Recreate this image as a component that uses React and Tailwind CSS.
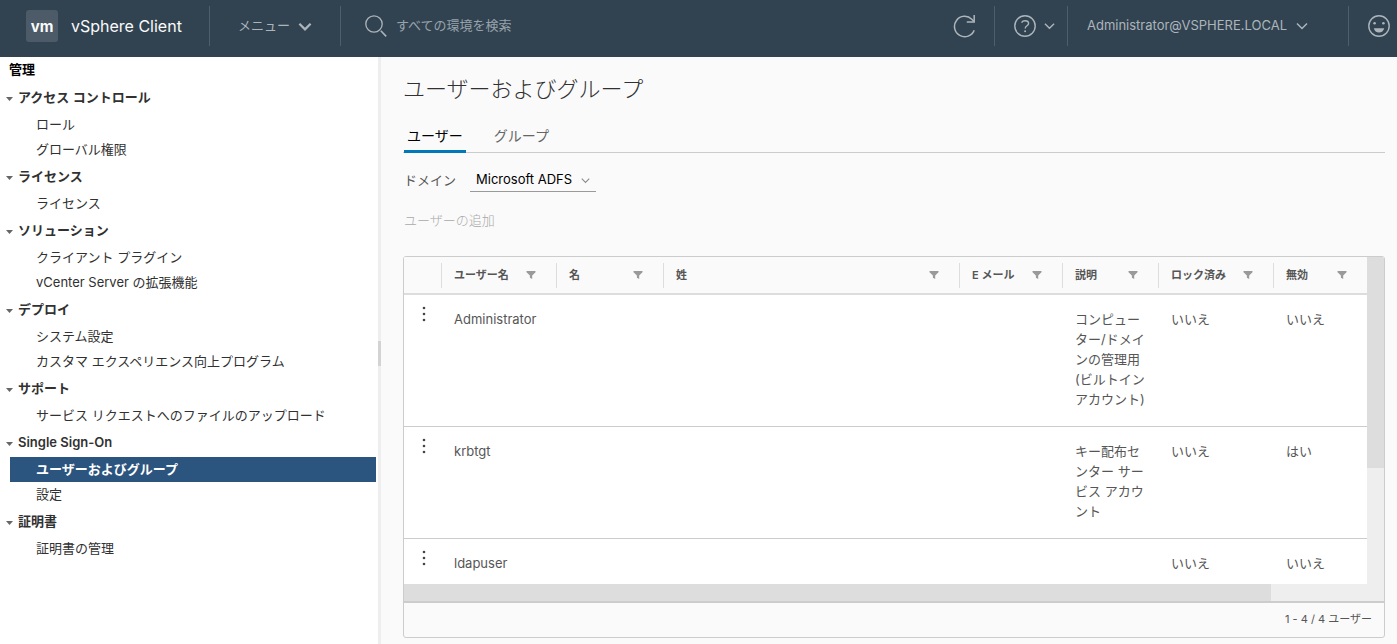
import React, { useState } from "react";

const sections = [
  { title: "アクセス コントロール", items: ["ロール", "グローバル権限"] },
  { title: "ライセンス", items: ["ライセンス"] },
  { title: "ソリューション", items: ["クライアント プラグイン", "vCenter Server の拡張機能"] },
  { title: "デプロイ", items: ["システム設定", "カスタマ エクスペリエンス向上プログラム"] },
  { title: "サポート", items: ["サービス リクエストへのファイルのアップロード"] },
  { title: "Single Sign-On", items: ["ユーザーおよびグループ", "設定"] },
  { title: "証明書", items: ["証明書の管理"] },
];

const columns = ["ユーザー名", "名", "姓", "E メール", "説明", "ロック済み", "無効"];

const users = [
  { name: "Administrator", description: "コンピューター/ドメインの管理用 (ビルトイン アカウント)", locked: "いいえ", disabled: "いいえ" },
  { name: "krbtgt", description: "キー配布センター サービス アカウント", locked: "いいえ", disabled: "はい" },
  { name: "ldapuser", description: "", locked: "いいえ", disabled: "いいえ" },
];

function Chevron({ className, width = 1.5 }) {
  return (
    <svg className={className} viewBox="0 0 12 8" fill="none" stroke="currentColor" strokeWidth={width} aria-hidden="true">
      <path d="M1 1.5 6 6.5l5-5" />
    </svg>
  );
}

function SearchIcon() {
  return (
    <svg className="size-[22px] shrink-0" viewBox="0 0 22 22" fill="none" stroke="currentColor" strokeWidth="1.3" aria-hidden="true">
      <circle cx="9" cy="9" r="8.2" />
      <path d="m15.8 15.8 5.4 5.6" strokeWidth="1.6" />
    </svg>
  );
}

function RefreshIcon() {
  return (
    <svg className="size-6" viewBox="0 0 24 24" fill="none" stroke="currentColor" strokeWidth="1.5" aria-hidden="true">
      <path d="M22.2 16.2A10.2 10.2 0 1 1 19.8 5.2l2 2" />
      <path d="M22.2 1v7h-7.4" />
    </svg>
  );
}

function HelpIcon() {
  return (
    <svg className="size-[22px]" viewBox="0 0 22 22" fill="none" stroke="currentColor" strokeWidth="1.4" aria-hidden="true">
      <circle cx="11" cy="11" r="10.2" />
      <path d="M7.6 7.6C8.3 6.4 9.5 5.8 11 5.8c2 0 3.6 1 3.6 2.7 0 2.3-3.4 2.2-3.4 4.9" />
      <circle cx="11.1" cy="16.2" r="1" fill="currentColor" stroke="none" />
    </svg>
  );
}

function SmileIcon() {
  return (
    <svg className="size-[22px]" viewBox="0 0 22 22" fill="none" stroke="currentColor" strokeWidth="1.4" aria-hidden="true">
      <circle cx="11" cy="11" r="10.2" />
      <circle cx="6.6" cy="8.2" r="1.3" fill="currentColor" stroke="none" />
      <circle cx="15.4" cy="8.2" r="1.3" fill="currentColor" stroke="none" />
      <path d="M5.8 13.2h10.4c-.6 2.8-2.6 4.4-5.2 4.4s-4.6-1.6-5.2-4.4Z" fill="currentColor" stroke="none" />
    </svg>
  );
}

function FilterIcon() {
  return (
    <svg className="h-2 w-[10px]" viewBox="0 0 10 8" fill="currentColor" aria-hidden="true">
      <path d="M.5 0h9v1.2L6.2 4.4V8L3.9 6.8V4.4L.5 1.2Z" />
    </svg>
  );
}

function Divider() {
  return <div className="h-10 w-px shrink-0 bg-[#4f5e6a]" />;
}

function TopBar() {
  return (
    <header className="flex h-[57px] shrink-0 items-center bg-[#314351] pr-[7px] pb-[5px] pl-[26px] text-[13px] text-[#adb5bb]">
      <a href="#home" className="flex items-center gap-[13px] pr-[27px] text-base whitespace-nowrap text-[#fafafa]">
        <span className="flex size-8 items-center justify-center rounded-[3px] bg-[#4c5b67] text-[15px] leading-none font-bold">vm</span>
        vSphere Client
      </a>
      <Divider />
      <button type="button" className="flex items-center gap-2 px-7 whitespace-nowrap">
        メニュー
        <Chevron className="h-[9px] w-[14px]" width={2} />
      </button>
      <Divider />
      <label className="flex flex-1 items-center gap-[9px] pl-6">
        <SearchIcon />
        <input
          type="search"
          aria-label="すべての環境を検索"
          placeholder="すべての環境を検索"
          className="w-full min-w-0 bg-transparent outline-none placeholder:text-[#98a2aa]"
        />
      </label>
      <button type="button" aria-label="更新" className="px-[18px]">
        <RefreshIcon />
      </button>
      <Divider />
      <button type="button" aria-label="ヘルプ" className="flex items-center gap-2 pr-3 pl-[19px]">
        <HelpIcon />
        <Chevron className="h-2 w-[11px]" />
      </button>
      <Divider />
      <button type="button" className="flex items-center gap-[9px] pr-10 pl-[19px]">
        Administrator@VSPHERE.LOCAL
        <Chevron className="h-2 w-3" />
      </button>
      <Divider />
      <button type="button" aria-label="フィードバック" className="pl-[19px]">
        <SmileIcon />
      </button>
    </header>
  );
}

function Sidebar() {
  const [selected, setSelected] = useState("ユーザーおよびグループ");
  return (
    <nav aria-label="管理" className="w-[378px] shrink-0 overflow-hidden bg-white pr-[2px] text-[13px] text-[#313131]">
      <h2 className="flex h-[26px] items-center pl-[9px] font-semibold text-black">管理</h2>
      {sections.map((section) => (
        <section key={section.title}>
          <button type="button" aria-expanded="true" className="flex h-[29px] w-full items-center gap-[5px] pl-[6px] font-semibold">
            <svg className="mt-[2px] h-1 w-[7px]" viewBox="0 0 7 4" fill="#666" aria-hidden="true">
              <path d="M0 0h7L3.5 4Z" />
            </svg>
            {section.title}
          </button>
          <ul className="pl-[10px]">
            {section.items.map((item) => (
              <li key={item}>
                <a
                  href="#item"
                  onClick={() => setSelected(item)}
                  className={
                    item === selected
                      ? "flex h-[25px] items-center bg-[#2b547e] pl-[26px] font-semibold text-white"
                      : "flex h-[25px] items-center pl-[26px]"
                  }
                >
                  {item}
                </a>
              </li>
            ))}
          </ul>
        </section>
      ))}
    </nav>
  );
}

function UserTable() {
  return (
    <div className="flex min-h-0 flex-1 flex-col overflow-hidden rounded-[3px] border border-[#ccc]">
      <div className="flex min-h-0 flex-1">
        <div className="min-w-0 flex-1 overflow-hidden bg-white">
          <table className="w-full table-fixed border-separate border-spacing-0 text-left text-[#565656]">
            <colgroup>
              <col className="w-[37px]" />
              <col className="w-[115px]" />
              <col className="w-[107px]" />
              <col />
              <col className="w-[103px]" />
              <col className="w-[96px]" />
              <col className="w-[115px]" />
              <col className="w-[94px]" />
            </colgroup>
            <thead className="bg-[#fafafa] text-[11px]">
              <tr>
                <th className="h-[38px] border-b-2 border-[#ddd] p-0" aria-label="操作" />
                {columns.map((column) => (
                  <th key={column} className="h-[38px] border-b-2 border-[#ddd] p-0 font-semibold">
                    <div className="flex h-[25px] items-center justify-between border-l border-[#ddd] pr-5 pl-3 whitespace-nowrap">
                      {column}
                      <button type="button" aria-label={column + "のフィルタ"} className="text-[#9a9a9a]">
                        <FilterIcon />
                      </button>
                    </div>
                  </th>
                ))}
              </tr>
            </thead>
            <tbody className="align-top text-[13px] leading-5">
              {users.map((user) => (
                <tr key={user.name} className="[&>td]:border-b [&>td]:border-[#ccc] [&>td]:pt-[14px] [&>td]:pr-3 [&>td]:pb-[17px] [&>td]:pl-[13px]">
                  <td>
                    <button type="button" aria-label="操作" className="-mt-[3px] flex w-[14px] justify-center">
                      <svg className="h-4 w-1" viewBox="0 0 4 16" fill="#454545" aria-hidden="true">
                        <circle cx="2" cy="2" r="1.3" />
                        <circle cx="2" cy="8" r="1.3" />
                        <circle cx="2" cy="14" r="1.3" />
                      </svg>
                    </button>
                  </td>
                  <td>{user.name}</td>
                  <td />
                  <td />
                  <td />
                  <td>{user.description}</td>
                  <td>{user.locked}</td>
                  <td>{user.disabled}</td>
                </tr>
              ))}
            </tbody>
          </table>
        </div>
        <div className="w-[17px] shrink-0 bg-[#eee]">
          <div className="h-[64.5%] bg-[#ddd]" />
        </div>
      </div>
      <div className="h-[17px] shrink-0 bg-[#eee] pr-[17px]">
        <div className="h-full w-[90%] bg-[#ddd]" />
      </div>
      <div className="flex h-[36px] shrink-0 items-center justify-end border-t-2 border-[#ccc] pr-3 pb-[2px] text-[11px] text-[#565656]">
        1 - 4 / 4 ユーザー
      </div>
    </div>
  );
}

export default function App() {
  const [tab, setTab] = useState("ユーザー");
  return (
    <div lang="ja" className="flex h-screen flex-col overflow-hidden bg-[#fafafa] font-['Inter','Noto_Sans_CJK_JP',sans-serif]">
      <TopBar />
      <div className="flex min-h-0 flex-1">
        <Sidebar />
        <div className="flex w-[3px] shrink-0 items-center bg-[#eee] pt-[6px]">
          <div className="h-[25px] w-full bg-[#d3d3d3]" />
        </div>
        <main className="flex min-w-0 flex-1 flex-col pr-3 pb-[6px] pl-[22px]">
          <h1 className="mt-4 text-[22px] leading-8 font-light text-[#313131]">ユーザーおよびグループ</h1>
          <div role="tablist" className="mt-4 flex h-8 gap-[25px] border-b border-[#ccc] pl-px text-sm">
            {["ユーザー", "グループ"].map((name) => (
              <button
                key={name}
                type="button"
                role="tab"
                aria-selected={name === tab}
                onClick={() => setTab(name)}
                className={
                  name === tab
                    ? "-mb-px border-b-[3px] border-[#0079b8] px-[3px] text-black"
                    : "-mb-px border-b-[3px] border-transparent px-[3px] text-[#666]"
                }
              >
                {name}
              </button>
            ))}
          </div>
          <div className="mt-4 flex h-[23px] items-center gap-[14px] pl-px text-[13px]">
            <label htmlFor="domain" className="text-[#565656]">ドメイン</label>
            <div className="relative h-full">
              <select id="domain" className="h-full w-[126px] appearance-none border-b border-[#9a9a9a] bg-transparent pl-[6px] text-black outline-none">
                <option>Microsoft ADFS</option>
              </select>
              <Chevron className="pointer-events-none absolute top-2 right-[6px] h-[7px] w-[9px] text-[#8c8c8c]" />
            </div>
          </div>
          <div className="mt-[18px] mb-[25px] flex h-[21px] items-center pl-px">
            <button type="button" disabled className="text-[13px] font-light text-[#a9a9a9]">ユーザーの追加</button>
          </div>
          <UserTable />
        </main>
      </div>
    </div>
  );
}
